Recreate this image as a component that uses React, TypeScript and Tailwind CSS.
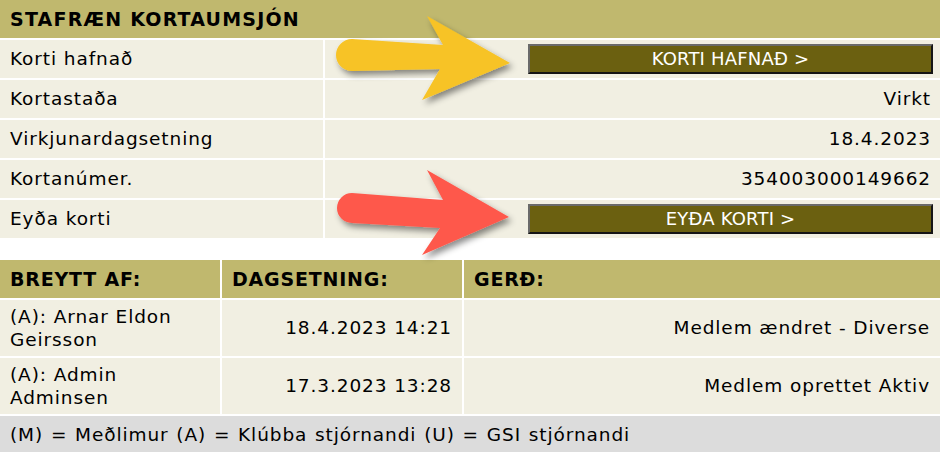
import React from "react";

const font = { fontFamily: '"DejaVu Sans", Verdana, sans-serif' };

function Arrow({ d, color, id }: { d: string; color: string; id: string }) {
  return (
    <svg className="pointer-events-none absolute left-0 top-0" width={940} height={452} viewBox="0 0 940 452">
      <defs>
        <filter id={id} x="-20%" y="-20%" width="140%" height="140%">
          <feDropShadow dx="3" dy="4" stdDeviation="3" floodColor="#000" floodOpacity="0.45" />
        </filter>
      </defs>
      <path d={d} fill={color} filter={`url(#${id})`} />
    </svg>
  );
}

function ActionButton({ label }: { label: string }) {
  return (
    <button className="h-[30px] w-[405px] border-2 border-t-[#6a6a6a] border-l-[#6a6a6a] border-b-[#151515] border-r-[#151515] bg-[#6b6010] text-[18px] leading-none tracking-[0.2px] text-white">
      {label}
    </button>
  );
}

const rows: { label: string; value?: string; button?: string }[] = [
  { label: "Korti hafnað", button: "KORTI HAFNAÐ >" },
  { label: "Kortastaða", value: "Virkt" },
  { label: "Virkjunardagsetning", value: "18.4.2023" },
  { label: "Kortanúmer.", value: "354003000149662" },
  { label: "Eyða korti", button: "EYÐA KORTI >" },
];

const history = [
  { by: ["(A): Arnar Eldon", "Geirsson"], date: "18.4.2023 14:21", type: "Medlem ændret - Diverse" },
  { by: ["(A): Admin", "Adminsen"], date: "17.3.2023 13:28", type: "Medlem oprettet Aktiv" },
];

const head = "flex h-[38px] items-center bg-[#c0b86e] px-[10px] text-[19px] font-bold tracking-[0.8px]";

export default function App() {
  return (
    <div
      className="relative h-[452px] w-[940px] overflow-hidden bg-white text-[18.5px] tracking-[0.9px] text-black"
      style={font}
    >
      <div className="grid grid-cols-[323px_1fr] gap-[2px] bg-white">
        <div className={`col-span-2 ${head} tracking-[1.2px]`}>STAFRÆN KORTAUMSJÓN</div>
        {rows.map((r) => (
          <React.Fragment key={r.label}>
            <div className="flex h-[38px] items-center bg-[#f1efe2] px-[10px]">{r.label}</div>
            <div className="flex h-[38px] items-center justify-end bg-[#f1efe2] pr-[10px]">
              {r.button ? (
                <div className="mr-[-3px]">
                  <ActionButton label={r.button} />
                </div>
              ) : (
                <span className="mr-[-1px]">{r.value}</span>
              )}
            </div>
          </React.Fragment>
        ))}
      </div>

      <div className="mt-[22px] grid grid-cols-[220px_240px_1fr] gap-[2px] bg-white">
        <div className={head}>BREYTT AF:</div>
        <div className={head}>DAGSETNING:</div>
        <div className={head}>GERÐ:</div>
        {history.map((h) => (
          <React.Fragment key={h.date}>
            <div className="flex h-[56px] flex-col justify-center bg-[#f1efe2] px-[10px] leading-[23px]">
              {h.by.map((l) => (
                <span key={l}>{l}</span>
              ))}
            </div>
            <div className="flex h-[56px] items-center justify-end bg-[#f1efe2] px-[10px]">{h.date}</div>
            <div className="flex h-[56px] items-center justify-end bg-[#f1efe2] px-[10px]">{h.type}</div>
          </React.Fragment>
        ))}
        <div className="col-span-3 flex h-[38px] items-center bg-[#dcdcdc] px-[10px] [word-spacing:1px]">
          (M) = Meðlimur (A) = Klúbba stjórnandi (U) = GSI stjórnandi
        </div>
      </div>

      <Arrow
        id="shy"
        color="#f7c325"
        d="M352,39 L443,45 L427,16 L510,63 L422,100 L440,69 L352,71 A16,16 0 0 1 352,39 Z"
      />
      <Arrow
        id="shr"
        color="#fe584c"
        d="M352,193 L443,200 L427,170 L509,217 L422,255 L440,228 L352,223 A15,15 0 0 1 352,193 Z"
      />
    </div>
  );
}
